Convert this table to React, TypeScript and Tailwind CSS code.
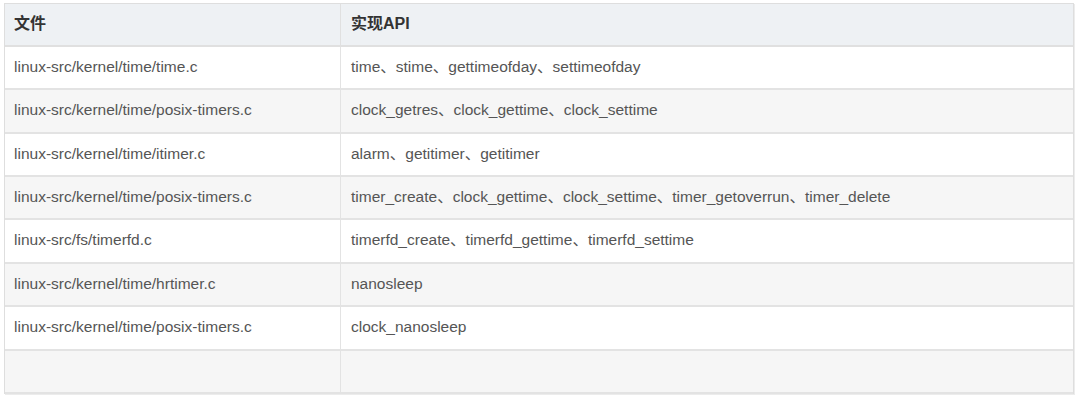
const rows: { file: string; api: string; h: string }[] = [
  { file: 'linux-src/kernel/time/time.c', api: 'time、stime、gettimeofday、settimeofday', h: 'h-[43px]' },
  { file: 'linux-src/kernel/time/posix-timers.c', api: 'clock_getres、clock_gettime、clock_settime', h: 'h-[44px]' },
  { file: 'linux-src/kernel/time/itimer.c', api: 'alarm、getitimer、getitimer', h: 'h-[43px]' },
  { file: 'linux-src/kernel/time/posix-timers.c', api: 'timer_create、clock_gettime、clock_settime、timer_getoverrun、timer_delete', h: 'h-[43px]' },
  { file: 'linux-src/fs/timerfd.c', api: 'timerfd_create、timerfd_gettime、timerfd_settime', h: 'h-[44px]' },
  { file: 'linux-src/kernel/time/hrtimer.c', api: 'nanosleep', h: 'h-[43px]' },
  { file: 'linux-src/kernel/time/posix-timers.c', api: 'clock_nanosleep', h: 'h-[44px]' },
  { file: '', api: '', h: 'h-[43px]' },
];

export default function App() {
  return (
    <div
      className="w-[1080px] h-[398px] bg-white pt-[3px] pl-[4px]"
      style={{ fontFamily: '"Liberation Sans", "Noto Sans CJK SC", Arial, sans-serif' }}
    >
      <div className="w-[1070px] border border-[#dedede] border-b-0 shadow-[1px_1px_0_#ececec] text-[15.5px]">
        <div className="grid grid-cols-[336px_1fr] h-[43px] bg-[#eef1f4] border-b-2 border-[#e0e0e0] font-bold text-[16px] text-[#333]">
          <div className="flex items-center pl-[9px] pb-[2px] border-r border-[#e0e0e0]">文件</div>
          <div className="flex items-center pl-[10px] pb-[2px]">实现API</div>
        </div>
        {rows.map((r, i) => (
          <div
            key={i}
            className={`grid grid-cols-[336px_1fr] ${r.h} border-b-2 border-[#e3e3e3] text-[#555] ${
              i % 2 === 0 ? 'bg-white' : 'bg-[#f6f6f6]'
            }`}
          >
            <div className="flex items-center pl-[9px] pb-[2px] border-r border-[#e3e3e3]">{r.file}</div>
            <div className="flex items-center pl-[10px] pb-[2px]">{r.api}</div>
          </div>
        ))}
      </div>
    </div>
  );
}
